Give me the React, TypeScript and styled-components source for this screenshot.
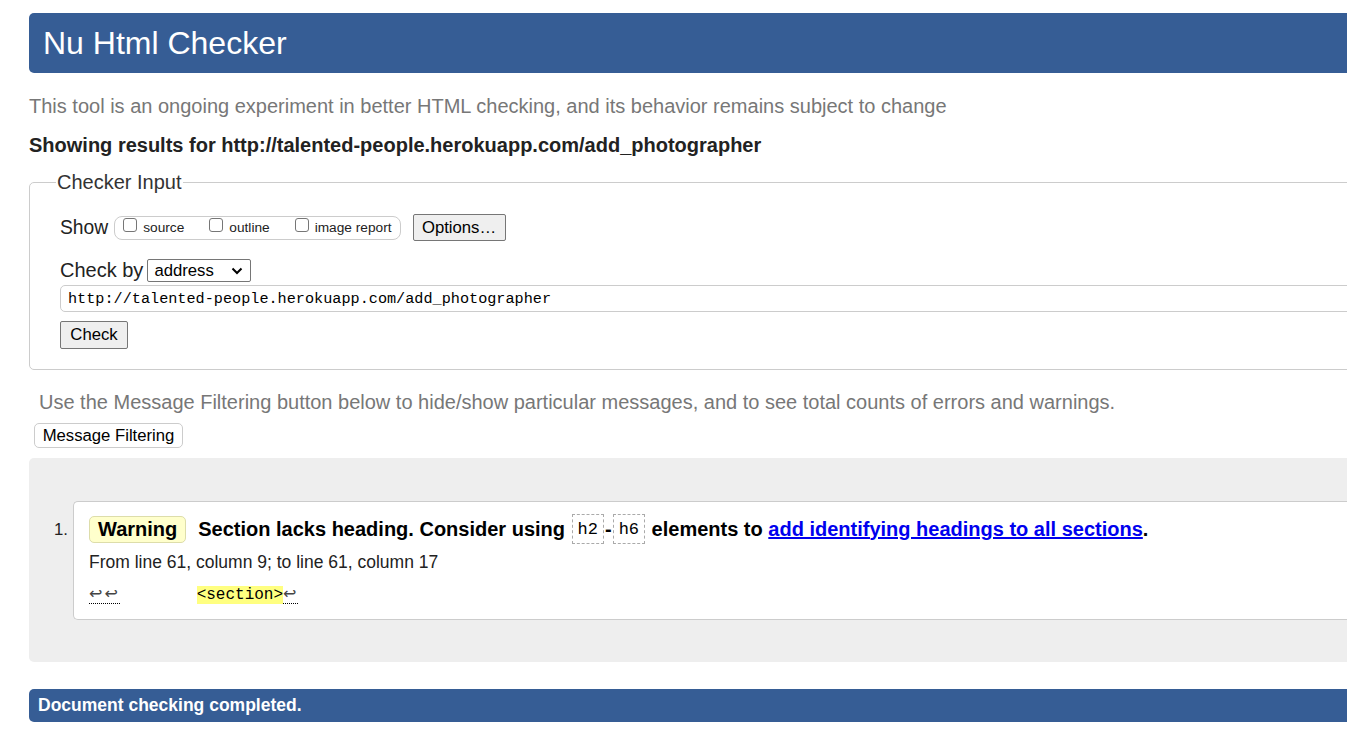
import React from "react";
import styled, { createGlobalStyle } from "styled-components";

const Global = createGlobalStyle`
  html, body { margin: 0; padding: 0; background: #fff; overflow: hidden; }
  body { font-family: "Liberation Sans", Arial, sans-serif; color: #222; }
`;

const Page = styled.div`
  width: 1400px;
  padding: 13px 0 0 29px;
  display: flex;
  flex-direction: column;
`;

const Header = styled.h1`
  margin: 0;
  height: 60px;
  background: #365d95;
  color: #fff;
  border-radius: 5px 0 0 5px;
  display: flex;
  align-items: center;
  padding-left: 14px;
  font-size: 32px;
  font-weight: normal;
`;

const Intro = styled.p`
  margin: 21px 0 0;
  font-size: 20px;
  line-height: 24px;
  color: #777;
`;

const Showing = styled.p`
  margin: 15px 0 0;
  font-size: 20px;
  line-height: 24px;
  font-weight: bold;
  color: #222;
`;

const Fieldset = styled.fieldset`
  margin: 13px 0 0;
  padding: 20px 30px 20px 30px;
  border: 1px solid #ccc;
  border-radius: 5px 0 0 5px;
  display: flex;
  flex-direction: column;
  min-inline-size: auto;
`;

const Legend = styled.legend`
  font-size: 20px;
  color: #333;
  padding: 0 1px;
  margin-left: -4px;
  line-height: 24px;
`;

const Row = styled.div<{ $mt?: number }>`
  display: flex;
  align-items: center;
  margin-top: ${(p) => p.$mt ?? 0}px;
`;

const RowLabel = styled.span<{ $size?: number }>`
  font-size: ${(p) => p.$size ?? 20}px;
  color: #222;
  margin-right: 6px;
`;

const Pill = styled.span`
  display: flex;
  align-items: center;
  height: 22px;
  border: 1px solid #ccc;
  border-radius: 8px;
  padding: 0 8px 0 8px;
  gap: 25px;
`;

const CheckLabel = styled.label`
  display: flex;
  align-items: center;
  font-size: 13.7px;
  color: #222;
  gap: 6px;
`;

const Box = styled.span`
  width: 12px;
  height: 12px;
  border: 1px solid #767676;
  border-radius: 3px;
  background: #fff;
  margin-top: -6px;
`;

const GrayButton = styled.button<{ $w: number; $h: number }>`
  width: ${(p) => p.$w}px;
  height: ${(p) => p.$h}px;
  background: #efefef;
  border: 1px solid #767676;
  border-radius: 2px;
  font-family: "Liberation Sans", Arial, sans-serif;
  font-size: 16.7px;
  color: #000;
  padding: 0;
  display: flex;
  align-items: center;
  justify-content: center;
`;

const Spacer = styled.span`
  width: 12px;
`;

const Select = styled.span`
  width: 104px;
  height: 23px;
  box-sizing: border-box;
  border: 1px solid #767676;
  border-radius: 2px;
  display: flex;
  align-items: center;
  justify-content: space-between;
  padding: 0 7px 0 6px;
  font-size: 16.7px;
  color: #000;
  margin-left: -2px;
`;

const UrlInput = styled.div`
  margin-top: 3px;
  height: 27px;
  box-sizing: border-box;
  border: 1px solid #ccc;
  border-radius: 5px 0 0 5px;
  display: flex;
  align-items: center;
  padding-left: 7px;
  font-family: "Liberation Mono", monospace;
  font-size: 15.2px;
  color: #000;
`;

const FilterNote = styled.p`
  margin: 20px 0 0 10px;
  font-size: 20px;
  line-height: 24px;
  color: #777;
`;

const FilterButton = styled.button`
  align-self: flex-start;
  margin: 9px 0 0 5px;
  height: 25px;
  width: 149px;
  background: #fff;
  border: 1px solid #ccc;
  border-radius: 5px;
  font-family: "Liberation Sans", Arial, sans-serif;
  font-size: 16.7px;
  color: #000;
  padding: 0;
`;

const Results = styled.div`
  margin-top: 10px;
  background: #eee;
  border-radius: 5px 0 0 5px;
  padding: 43px 0 42px 25px;
`;

const List = styled.ol`
  margin: 0;
  padding: 0;
  list-style: none;
`;

const Item = styled.li`
  display: flex;
  align-items: flex-start;
`;

const Num = styled.span`
  width: 19px;
  font-size: 16.7px;
  color: #222;
  margin-top: 19px;
`;

const Card = styled.div`
  flex: 1;
  background: #fff;
  border: 1px solid #ccc;
  border-right: none;
  border-radius: 5px 0 0 5px;
  padding: 12px 15px 13px 15px;
`;

const MsgLine = styled.p`
  margin: 0;
  display: flex;
  align-items: center;
  font-size: 20px;
  font-weight: bold;
  color: #000;
  white-space: pre;
`;

const Badge = styled.strong`
  background: #ffffcc;
  border: 1px solid #ddddaa;
  border-radius: 5px;
  height: 25px;
  display: inline-flex;
  align-items: center;
  padding: 0 8px;
  margin-right: 12px;
`;

const Code = styled.code`
  font-family: "Liberation Mono", monospace;
  font-weight: normal;
  font-size: 17px;
  border: 1px dashed #aaa;
  padding: 5px 5px 4px;
  margin: 0 1px;
`;

const Link = styled.a`
  color: #0000ee;
  text-decoration: underline;
`;

const Location = styled.p`
  margin: 8px 0 0;
  font-size: 17.5px;
  line-height: 20px;
  color: #222;
`;

const Extract = styled.p`
  margin: 11px 0 0;
  font-family: "Liberation Mono", monospace;
  font-size: 16px;
  line-height: 22px;
  color: #000;
  white-space: pre;
`;

const Lf = styled.span`
  border-bottom: 1px dotted #000;
  color: #444;
  font-family: "DejaVu Sans", sans-serif;
  font-size: 16px;
  letter-spacing: 2px;
`;

const Mark = styled.b`
  background: #ffff80;
  font-weight: normal;
`;

const Footer = styled.p`
  margin: 27px 0 0;
  height: 33px;
  background: #365d95;
  color: #fff;
  border-radius: 5px 0 0 5px;
  display: flex;
  align-items: center;
  padding-left: 9px;
  font-size: 17.5px;
  font-weight: bold;
`;

export default function App() {
  return (
    <>
      <Global />
      <Page>
        <Header>Nu Html Checker</Header>
        <Intro>
          This tool is an ongoing experiment in better HTML checking, and its behavior remains subject to change
        </Intro>
        <Showing>Showing results for http://talented-people.herokuapp.com/add_photographer</Showing>
        <Fieldset>
          <Legend>Checker Input</Legend>
          <Row>
            <RowLabel $size={19.3}>Show</RowLabel>
            <Pill>
              <CheckLabel>
                <Box />
                source
              </CheckLabel>
              <CheckLabel>
                <Box />
                outline
              </CheckLabel>
              <CheckLabel>
                <Box />
                image report
              </CheckLabel>
            </Pill>
            <Spacer />
            <GrayButton $w={93} $h={27}>Options…</GrayButton>
          </Row>
          <Row $mt={18}>
            <RowLabel>Check by</RowLabel>
            <Select>
              address
              <svg width="12" height="8" viewBox="0 0 12 8">
                <path d="M1.5 1.5 L6 6 L10.5 1.5" fill="none" stroke="#000" strokeWidth="2" />
              </svg>
            </Select>
          </Row>
          <UrlInput>http://talented-people.herokuapp.com/add_photographer</UrlInput>
          <Row $mt={9}>
            <GrayButton $w={68} $h={28}>Check</GrayButton>
          </Row>
        </Fieldset>
        <FilterNote>
          Use the Message Filtering button below to hide/show particular messages, and to see total counts of errors and warnings.
        </FilterNote>
        <FilterButton>Message Filtering</FilterButton>
        <Results>
          <List>
            <Item>
              <Num>1.</Num>
              <Card>
                <MsgLine>
                  <Badge>Warning</Badge>
                  {"Section lacks heading. Consider using "}
                  <Code>h2</Code>-<Code>h6</Code>
                  {" elements to "}
                  <Link href="#">add identifying headings to all sections</Link>.
                </MsgLine>
                <Location>From line 61, column 9; to line 61, column 17</Location>
                <Extract>
                  <Lf>↩↩</Lf>
                  {"        "}
                  <Mark>&lt;section&gt;</Mark>
                  <Lf>↩</Lf>
                </Extract>
              </Card>
            </Item>
          </List>
        </Results>
        <Footer>Document checking completed.</Footer>
      </Page>
    </>
  );
}
